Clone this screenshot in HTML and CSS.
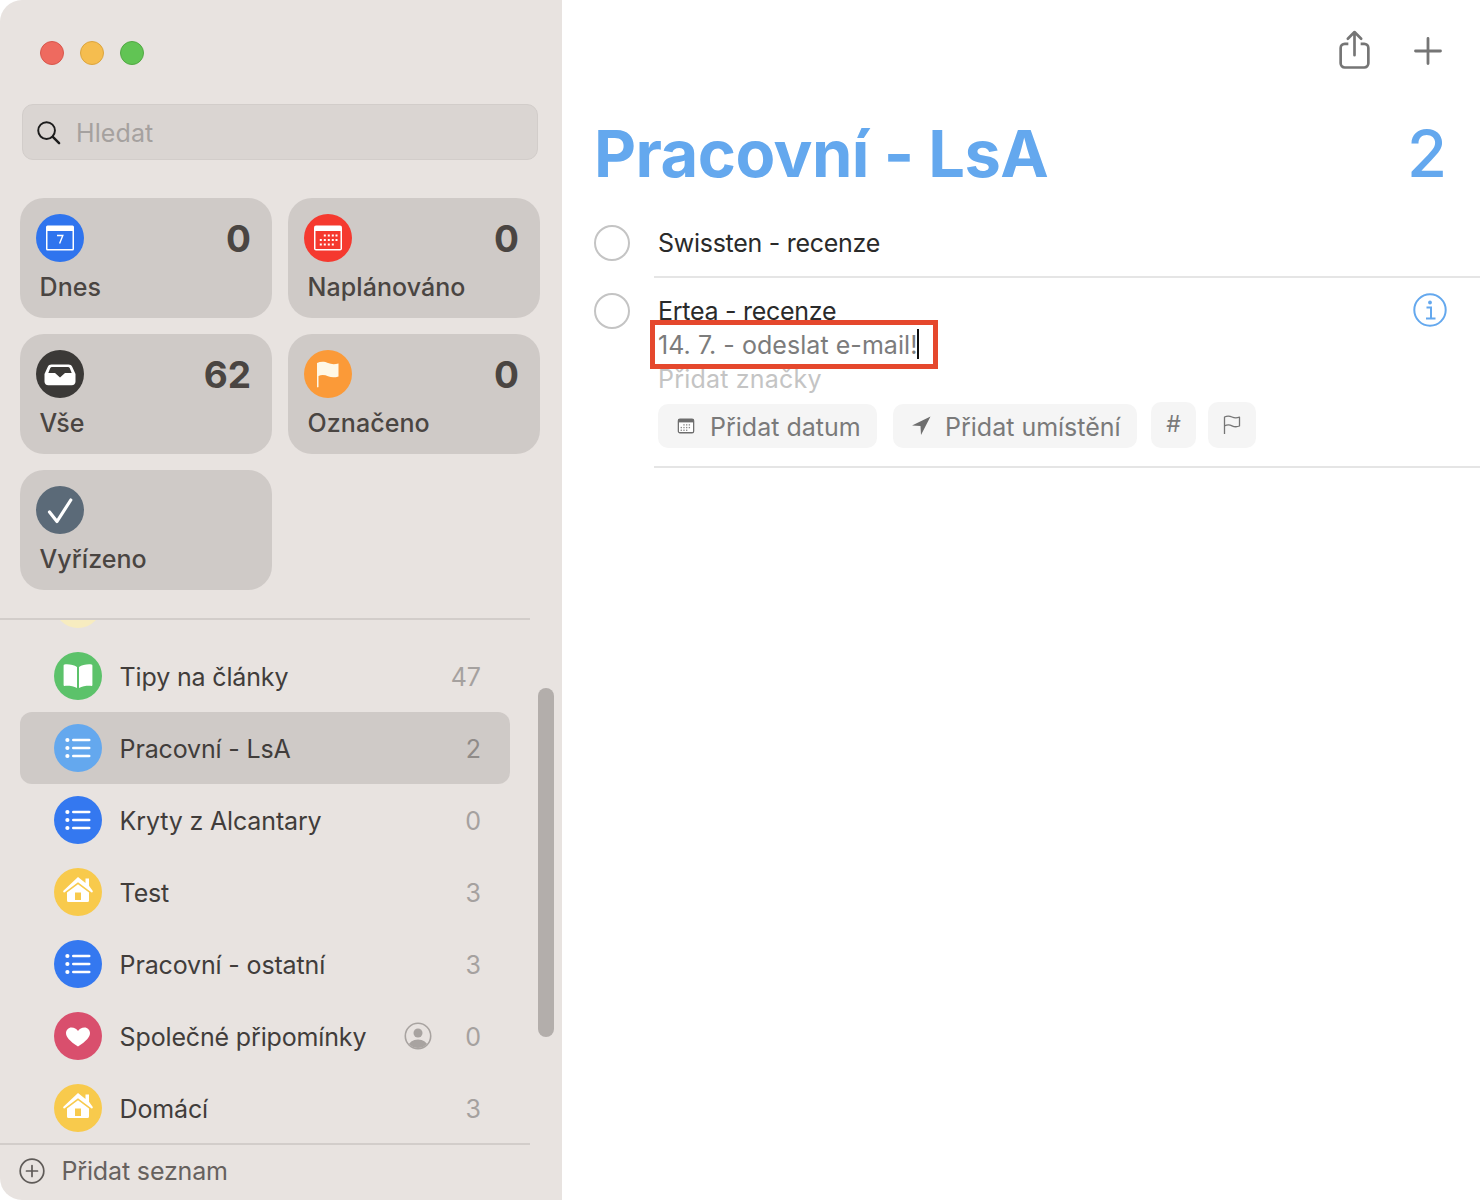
FILE: index.html
```html
<!DOCTYPE html>
<html lang="cs">
<head>
<meta charset="utf-8">
<title>Připomínky</title>
<link rel="stylesheet" href="styles.css">
</head>
<body>
<svg class="defs" width="0" height="0">
  <symbol id="i-list" viewBox="0 0 48 48"><g fill="#fff"><circle cx="13.400" cy="16" r="2.100"/><circle cx="13.400" cy="24" r="2.100"/><circle cx="13.400" cy="32" r="2.100"/><rect x="18" y="14.700" width="18.500" height="2.600" rx="1.300"/><rect x="18" y="22.700" width="18.500" height="2.600" rx="1.300"/><rect x="18" y="30.700" width="18.500" height="2.600" rx="1.300"/></g></symbol>
  <symbol id="i-home" viewBox="0 0 48 48"><path fill="#fff" d="M24 9 31.500 15V10.500H35V17.800L38.600 22.800c.6.900 0 1.900-1 1.600L24 14.200 10.400 24.400c-1 .3-1.600-.7-1-1.600Z"/><path fill="#fff" fill-rule="evenodd" d="M24 16.300 35 24.600V32.500A1.500 1.500 0 0 1 33.500 34H14.500A1.500 1.500 0 0 1 13 32.500V24.600ZM21 24.500V32H27V24.500Z"/></symbol>
</svg>
<div class="window">
  <aside class="sidebar">
    <div class="lights"><span class="light red"></span><span class="light yellow"></span><span class="light green"></span></div>
    <div class="search">
      <svg class="search-icon" viewBox="0 0 26 26"><circle cx="11" cy="11" r="8.700" fill="none" stroke="#1c1c1c" stroke-width="2"/><path d="M17.500 17.500 24 24" stroke="#1c1c1c" stroke-width="2.600" stroke-linecap="round"/></svg>
      <span class="search-text">Hledat</span>
    </div>
    <div class="cards">
      <div class="card">
        <div class="card-top">
          <span class="badge blue-strong"><svg viewBox="0 0 48 48"><path d="M11.500 11.500h25a1.500 1.500 0 0 1 1.500 1.500v22a1.500 1.500 0 0 1-1.500 1.500h-25A1.500 1.500 0 0 1 10 35V13a1.500 1.500 0 0 1 1.500-1.500Z" fill="#fff"/><rect x="11.500" y="17" width="25" height="18" fill="#2f74ee"/><path d="M21 21.500h5.800l-3.200 8" fill="none" stroke="#fff" stroke-width="1.400"/></svg></span>
          <span class="card-count">0</span>
        </div>
        <div class="card-label">Dnes</div>
      </div>
      <div class="card">
        <div class="card-top">
          <span class="badge red-badge"><svg viewBox="0 0 48 48"><rect x="10" y="11.500" width="28" height="25" rx="2" fill="#fff"/><rect x="11.500" y="17" width="25" height="18" fill="#f5392f"/><g fill="#fff"><rect x="19.800" y="20.500" width="2" height="2"/><rect x="23.800" y="20.500" width="2" height="2"/><rect x="27.800" y="20.500" width="2" height="2"/><rect x="31.500" y="20.500" width="2" height="2"/><rect x="15.800" y="25" width="2" height="2"/><rect x="19.800" y="25" width="2" height="2"/><rect x="23.800" y="25" width="2" height="2"/><rect x="27.800" y="25" width="2" height="2"/><rect x="31.500" y="25" width="2" height="2"/><rect x="15.800" y="29.500" width="2" height="2"/><rect x="19.800" y="29.500" width="2" height="2"/><rect x="23.800" y="29.500" width="2" height="2"/><rect x="27.800" y="29.500" width="2" height="2"/></g></svg></span>
          <span class="card-count">0</span>
        </div>
        <div class="card-label">Naplánováno</div>
      </div>
      <div class="card">
        <div class="card-top">
          <span class="badge dark-badge"><svg viewBox="0 0 48 48"><path d="M15.500 14.500h17c1.800 0 3 .8 3.700 2.300L39.500 24v7.500c0 2.300-1.500 3.800-3.800 3.800H12.300c-2.300 0-3.800-1.500-3.800-3.800V24l3.300-7.200c.7-1.500 1.900-2.300 3.700-2.300Z" fill="#fff"/><path d="M16 17h16c.8 0 1.300.3 1.700 1l2 5H29l-5 4.500-5-4.500H12.300l2-5c.4-.7.9-1 1.700-1Z" fill="#3b3937"/></svg></span>
          <span class="card-count">62</span>
        </div>
        <div class="card-label">Vše</div>
      </div>
      <div class="card">
        <div class="card-top">
          <span class="badge orange-badge"><svg viewBox="0 0 48 48"><path d="M13 13c4-1.800 8-1.300 11 0s6.500 1.500 10.500.5V26.500c-4 1.300-7.500 1-10.500-.3s-6.500-1.500-9.500-.3V37a1 1 0 0 1-1.500 0Z" fill="#fff8e6"/></svg></span>
          <span class="card-count">0</span>
        </div>
        <div class="card-label">Označeno</div>
      </div>
      <div class="card">
        <div class="card-top">
          <span class="badge slate-badge"><svg viewBox="0 0 48 48"><path d="M13.500 26 21 35.500 34.800 14" fill="none" stroke="#fff" stroke-width="3.200" stroke-linecap="round" stroke-linejoin="round"/></svg></span>
        </div>
        <div class="card-label">Vyřízeno</div>
      </div>
    </div>
    <div class="list-pane">
      <div class="list">
        <div class="row">
          <span class="badge pale-badge"></span>
        </div>
        <div class="row">
          <span class="badge green-badge"><svg viewBox="0 0 48 48"><path d="M23 15C20 13 15 12 10.500 12.500a1 1 0 0 0-.9 1V33c0 .6.4 1 1 .9 4-.3 9 .2 12.400 2.100Zm2 0c3-2 8-3 12.500-2.500a1 1 0 0 1 .9 1V33c0 .6-.4 1-1 .9-4-.3-9 .2-12.400 2.100Z" fill="#fff"/></svg></span>
          <span class="row-name">Tipy na články</span>
          <span class="row-count">47</span>
        </div>
        <div class="row selected">
          <span class="badge sky-badge"><svg viewBox="0 0 48 48"><use href="#i-list"/></svg></span>
          <span class="row-name">Pracovní - LsA</span>
          <span class="row-count">2</span>
        </div>
        <div class="row">
          <span class="badge blue-badge"><svg viewBox="0 0 48 48"><use href="#i-list"/></svg></span>
          <span class="row-name">Kryty z Alcantary</span>
          <span class="row-count">0</span>
        </div>
        <div class="row">
          <span class="badge gold-badge"><svg viewBox="0 0 48 48"><use href="#i-home"/></svg></span>
          <span class="row-name">Test</span>
          <span class="row-count">3</span>
        </div>
        <div class="row">
          <span class="badge blue-badge"><svg viewBox="0 0 48 48"><use href="#i-list"/></svg></span>
          <span class="row-name">Pracovní - ostatní</span>
          <span class="row-count">3</span>
        </div>
        <div class="row">
          <span class="badge rose-badge"><svg viewBox="0 0 48 48"><path d="M24 34.500C15.500 29 12 25 12 21c0-3 2.500-5.500 5.500-5.500 2.800 0 5 1.500 6.500 3.500 1.500-2 3.700-3.500 6.500-3.500 3 0 5.500 2.500 5.500 5.500 0 4-3.500 8-12 13.500Z" fill="#fff"/></svg></span>
          <span class="row-name">Společné připomínky</span>
          <svg class="shared" viewBox="0 0 28 28"><defs><clipPath id="shared-clip"><circle cx="14" cy="14" r="12"/></clipPath></defs><circle cx="14" cy="14" r="12.700" fill="none" stroke="#a8a3a0" stroke-width="1.600"/><circle cx="14" cy="11" r="4.500" fill="#a8a3a0"/><ellipse cx="14" cy="24" rx="9.500" ry="6.500" fill="#a8a3a0" clip-path="url(#shared-clip)"/></svg>
          <span class="row-count">0</span>
        </div>
        <div class="row">
          <span class="badge gold-badge"><svg viewBox="0 0 48 48"><use href="#i-home"/></svg></span>
          <span class="row-name">Domácí</span>
          <span class="row-count">3</span>
        </div>
      </div>
      <div class="scrollbar"></div>
    </div>
    <div class="footer">
      <svg class="add-list-icon" viewBox="0 0 26 26"><circle cx="13" cy="13" r="11.800" fill="none" stroke="#5f5b58" stroke-width="1.700"/><path d="M13 7.500v11M7.500 13h11" stroke="#5f5b58" stroke-width="1.700" stroke-linecap="round"/></svg>
      <span class="footer-text">Přidat seznam</span>
    </div>
  </aside>
  <main class="main">
    <div class="toolbar">
      <svg class="share" viewBox="0 0 30 38"><path d="M9 13.500H5.500a4 4 0 0 0-4 4v15a4 4 0 0 0 4 4h19a4 4 0 0 0 4-4v-15a4 4 0 0 0-4-4H21" fill="none" stroke="#757575" stroke-width="2.600"/><path d="M15 24.500V2.500M8.500 8.500 15 2l6.500 6.500" fill="none" stroke="#757575" stroke-width="2.600" stroke-linecap="round" stroke-linejoin="round"/></svg>
      <svg class="plus" viewBox="0 0 28 28"><path d="M14 1.500v25M1.500 14h25" stroke="#757575" stroke-width="2.800" stroke-linecap="round"/></svg>
    </div>
    <header class="title-row">
      <h1 class="title">Pracovní - LsA</h1>
      <span class="title-count">2</span>
    </header>
    <div class="todo first">
      <span class="check"></span>
      <div class="todo-body">
        <div class="todo-title">Swissten - recenze</div>
      </div>
    </div>
    <div class="todo second">
      <span class="check"></span>
      <div class="todo-body">
        <div class="todo-title">Ertea - recenze</div>
        <div class="todo-note">14. 7. - odeslat e-mail!<span class="caret"></span></div>
        <div class="todo-tags">Přidat značky</div>
        <div class="chips">
          <span class="chip chip-date"><svg class="chip-icon" viewBox="0 0 20 20"><rect x="1.500" y="2.500" width="17" height="15" rx="1.800" fill="#fff" stroke="#6e6e6e" stroke-width="1.400"/><rect x="1.500" y="2.500" width="17" height="3.500" fill="#6e6e6e"/><g fill="#8a8a8a"><rect x="7" y="8" width="1.500" height="1.500"/><rect x="10" y="8" width="1.500" height="1.500"/><rect x="13" y="8" width="1.500" height="1.500"/><rect x="4" y="11" width="1.500" height="1.500"/><rect x="7" y="11" width="1.500" height="1.500"/><rect x="10" y="11" width="1.500" height="1.500"/><rect x="13" y="11" width="1.500" height="1.500"/><rect x="4" y="14" width="1.500" height="1.500"/><rect x="7" y="14" width="1.500" height="1.500"/><rect x="10" y="14" width="1.500" height="1.500"/></g></svg>Přidat datum</span>
          <span class="chip chip-place"><svg class="place-icon" viewBox="0 0 20 20"><path d="M19.500.5 1 9.500l8.500.5.5 9Z" fill="#6e6e6e"/></svg>Přidat umístění</span>
          <span class="chip chip-small">#</span>
          <span class="chip chip-flag"><svg class="flag-icon" viewBox="0 0 20 22"><path d="M2.500 20V3c3-1.500 5.500-1 7.500 0s4.500 1.300 7.500.2V12c-3 1.200-5.500.8-7.500-.2s-4.500-1.300-7.500 0" fill="none" stroke="#757575" stroke-width="1.300" stroke-linejoin="round"/></svg></span>
        </div>
      </div>
      <svg class="info" viewBox="0 0 34 34"><circle cx="17" cy="17" r="15.700" fill="none" stroke="#64a8ee" stroke-width="2"/><circle cx="17" cy="9.500" r="1.900" fill="#64a8ee"/><path d="M13.500 14.500H18V25M13 25.500h9.500" fill="none" stroke="#64a8ee" stroke-width="2"/></svg>
      <span class="highlight"></span>
    </div>
  </main>
</div>
</body>
</html>
```
FILE: styles.css
```css
* { box-sizing: border-box; }
html, body { margin: 0; padding: 0; background: #fff; }
body { width: 1480px; height: 1200px; overflow: hidden; font-family: Inter, "Liberation Sans", sans-serif; }
.defs { position: absolute; }
.window { display: flex; width: 1480px; height: 1200px; }

.sidebar { width: 562px; height: 1200px; flex: none; display: flex; flex-direction: column; background: #e8e3e0; border-radius: 22px 0 0 22px; }
.lights { display: flex; gap: 16px; padding: 41px 0 0 40px; height: 104px; }
.light { width: 24px; height: 24px; border-radius: 50%; }
.red { background: #ee6a5f; border: 1px solid #d8574c; }
.yellow { background: #f5bd4f; border: 1px solid #dca53e; }
.green { background: #61c454; border: 1px solid #52a944; }

.search { margin-left: 22px; width: 516px; height: 56px; display: flex; align-items: center; gap: 15px; padding-left: 13px; background: #dad5d2; border: 1px solid #d2cdca; border-radius: 11px; }
.search-icon { width: 25px; height: 25px; flex: none; }
.search-text { padding-top: 2px; font-size: 25px; letter-spacing: 0.1px; color: #a5a19f; }

.cards { display: grid; grid-template-columns: 252px 252px; grid-auto-rows: 120px; gap: 16px; padding: 38px 0 0 20px; height: 459px; flex: none; }
.card { display: flex; flex-direction: column; background: #cfcac7; border-radius: 24px; padding: 16px 21px 0 16px; }
.card-top { display: flex; justify-content: space-between; height: 48px; }
.card-count { font-size: 37px; line-height: 50px; font-weight: 700; color: #4a4542; }
.card-label { margin: 8px 0 0 3.6px; font-size: 25px; line-height: 34px; font-weight: 500; color: #4a4542; letter-spacing: 0.05px; }

.badge { width: 48px; height: 48px; flex: none; border-radius: 50%; display: block; }
.badge svg { display: block; width: 48px; height: 48px; }
.blue-strong { background: #2f74ee; }
.red-badge { background: #f5392f; }
.dark-badge { background: #3b3937; }
.orange-badge { background: #fb9a38; }
.slate-badge { background: #5b6a78; }
.pale-badge { background: #f7ecc0; }
.green-badge { background: #5cc26a; }
.sky-badge { background: #64a8ee; }
.blue-badge { background: #3478f0; }
.gold-badge { background: #f8ca4c; }
.rose-badge { background: #d94f6d; }

.list-pane { position: relative; width: 562px; height: 526px; padding-top: 2px; overflow: hidden; margin-top: -1px; flex: none; }
.list-pane::before { content: ""; position: absolute; z-index: 1; left: 0; top: 0; width: 530px; height: 2px; background: #d2cdca; }
.list { margin-top: -52px; padding-left: 20px; }
.row { width: 490px; height: 72px; display: flex; align-items: center; padding: 0 29px 0 34px; border-radius: 12px; }
.row.selected { background: #cfcac7; }
.row-name { margin-left: 17.6px; padding-top: 2px; font-size: 25px; letter-spacing: -0.15px; color: #413d3b; flex: 1; }
.row-count { padding-top: 2px; font-size: 25px; color: #a5a19f; }
.selected .row-count { color: #8f8b88; }
.shared { width: 28px; height: 28px; flex: none; margin-right: 33px; }
.scrollbar { position: absolute; left: 538px; top: 70px; width: 16px; height: 349px; border-radius: 8px; background: #b3aeab; }

.footer { flex: 1; display: flex; align-items: center; gap: 16.5px; padding: 0 0 3px 19px; border-top: 2px solid #d2cdca; width: 530px; margin-top: -1px; }
.add-list-icon { width: 26px; height: 26px; flex: none; }
.footer-text { font-size: 25px; letter-spacing: -0.15px; color: #66615e; }

.main { flex: 1; display: flex; flex-direction: column; min-width: 0; }
.toolbar { height: 100px; flex: none; display: flex; justify-content: flex-end; gap: 44px; padding: 30px 38px 0 0; }
.share { width: 31px; height: 39px; flex: none; }
.plus { width: 28px; height: 28px; flex: none; margin-top: 7px; }
.title-row { display: flex; justify-content: space-between; align-items: flex-start; height: 110px; flex: none; padding: 0 33px 0 32px; }
.title { margin: -1px 0 0; font-size: 65px; line-height: 110px; font-weight: 700; letter-spacing: -0.57px; color: #64a8ee; }
.title-count { font-size: 65px; line-height: 110px; margin-top: -1px; font-weight: 500; color: #64a8ee; }

.todo { position: relative; display: flex; padding-left: 32px; flex: none; }
.first { height: 68px; padding-top: 15px; }
.second { height: 190px; padding-top: 15px; }
.check { width: 36px; height: 36px; flex: none; border-radius: 50%; border: 2px solid #c4c4c4; }
.todo-body { flex: 1; margin-left: 24px; padding-left: 4px; border-bottom: 2px solid #e5e5e5; min-width: 0; }
.second .todo-body { padding-top: 1px; }
.todo-title { font-size: 25px; line-height: 36px; letter-spacing: -0.28px; color: #2a2a2a; }
.second .todo-title { line-height: 34px; }
.todo-note { font-size: 25px; line-height: 34px; letter-spacing: 0.05px; color: #7c7c7c; }
.todo-tags { font-size: 25px; line-height: 34px; letter-spacing: 0.2px; color: #c4c4c4; }
.caret { display: inline-block; width: 2px; height: 30px; background: #111; vertical-align: -5px; }

.chips { display: flex; align-items: flex-start; margin-top: 8px; }
.chip { display: flex; align-items: center; height: 44px; background: #f5f5f5; border-radius: 10px; font-size: 25px; color: #7a7a7a; }
.chip-date { width: 219px; gap: 15px; padding: 2px 0 0 19px; }
.chip-place { width: 244px; margin-left: 16px; gap: 14px; padding: 2px 0 0 18px; }
.chip-small { width: 45px; margin-left: 14px; margin-top: -2px; height: 46px; padding-bottom: 2px; font-size: 23px; justify-content: center; }
.chip-flag { width: 48px; margin-left: 12px; margin-top: -2px; height: 46px; justify-content: center; }
.chip-icon { width: 18px; height: 18px; flex: none; margin-bottom: 2px; }
.place-icon { width: 20px; height: 20px; flex: none; margin-bottom: 2px; }
.flag-icon { width: 20px; height: 22px; }
.info { position: absolute; left: 851px; top: 15px; width: 34px; height: 34px; }
.highlight { position: absolute; left: 88px; top: 42px; width: 288px; height: 49px; border: 5px solid #e5482d; }
```
